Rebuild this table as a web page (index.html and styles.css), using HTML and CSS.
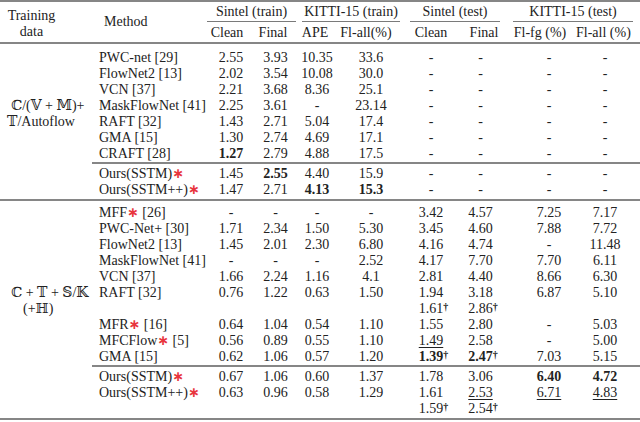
FILE: index.html
```html
<!DOCTYPE html>
<html>
<head>
<meta charset="utf-8">
<link rel="stylesheet" href="styles.css">
</head>
<body>
<div class="tbl">
  <div class="head">
    <div class="h-train">Training<br>data</div>
    <div class="h-method">Method</div>
    <div class="grp g1">Sintel (train)</div>
    <div class="grp g2">KITTI-15 (train)</div>
    <div class="grp g3">Sintel (test)</div>
    <div class="grp g4">KITTI-15 (test)</div>
    <div class="sh s2">Clean</div>
    <div class="sh s3">Final</div>
    <div class="sh s4">APE</div>
    <div class="sh s5">Fl-all(%)</div>
    <div class="sh s6">Clean</div>
    <div class="sh s7">Final</div>
    <div class="sh s8">Fl-fg (%)</div>
    <div class="sh s9">Fl-all (%)</div>
  </div>

  <div class="sec sec-first">
    <div class="r"><span></span><span>PWC-net [29]</span><span>2.55</span><span>3.93</span><span>10.35</span><span>33.6</span><span>-</span><span>-</span><span>-</span><span>-</span></div>
    <div class="r"><span></span><span>FlowNet2 [13]</span><span>2.02</span><span>3.54</span><span>10.08</span><span>30.0</span><span>-</span><span>-</span><span>-</span><span>-</span></div>
    <div class="r"><span></span><span>VCN [37]</span><span>2.21</span><span>3.68</span><span>8.36</span><span>25.1</span><span>-</span><span>-</span><span>-</span><span>-</span></div>
    <div class="r"><span class="td td1">ℂ/(𝕍 + 𝕄)+</span><span>MaskFlowNet [41]</span><span>2.25</span><span>3.61</span><span>-</span><span>23.14</span><span>-</span><span>-</span><span>-</span><span>-</span></div>
    <div class="r"><span class="td td2">𝕋/Autoflow</span><span>RAFT [32]</span><span>1.43</span><span>2.71</span><span>5.04</span><span>17.4</span><span>-</span><span>-</span><span>-</span><span>-</span></div>
    <div class="r"><span></span><span>GMA [15]</span><span>1.30</span><span>2.74</span><span>4.69</span><span>17.1</span><span>-</span><span>-</span><span>-</span><span>-</span></div>
    <div class="r"><span></span><span>CRAFT [28]</span><span><b>1.27</b></span><span>2.79</span><span>4.88</span><span>17.5</span><span>-</span><span>-</span><span>-</span><span>-</span></div>
    <div class="midrule"></div>
    <div class="r"><span></span><span>Ours(SSTM)<span class="st">∗</span></span><span>1.45</span><span><b>2.55</b></span><span>4.40</span><span>15.9</span><span>-</span><span>-</span><span>-</span><span>-</span></div>
    <div class="r"><span></span><span>Ours(SSTM++)<span class="st">∗</span></span><span>1.47</span><span>2.71</span><span><b>4.13</b></span><span><b>15.3</b></span><span>-</span><span>-</span><span>-</span><span>-</span></div>
  </div>

  <div class="sec sec-second">
    <div class="r"><span></span><span>MFF<span class="st">∗</span> [26]</span><span>-</span><span>-</span><span>-</span><span>-</span><span>3.42</span><span>4.57</span><span>7.25</span><span>7.17</span></div>
    <div class="r"><span></span><span>PWC-Net+ [30]</span><span>1.71</span><span>2.34</span><span>1.50</span><span>5.30</span><span>3.45</span><span>4.60</span><span>7.88</span><span>7.72</span></div>
    <div class="r"><span></span><span>FlowNet2 [13]</span><span>1.45</span><span>2.01</span><span>2.30</span><span>6.80</span><span>4.16</span><span>4.74</span><span>-</span><span>11.48</span></div>
    <div class="r"><span></span><span>MaskFlowNet [41]</span><span>-</span><span>-</span><span>-</span><span>2.52</span><span>4.17</span><span>7.70</span><span>7.70</span><span>6.11</span></div>
    <div class="r"><span></span><span>VCN [37]</span><span>1.66</span><span>2.24</span><span>1.16</span><span>4.1</span><span>2.81</span><span>4.40</span><span>8.66</span><span>6.30</span></div>
    <div class="r"><span class="td td3">ℂ + 𝕋 + 𝕊/𝕂</span><span>RAFT [32]</span><span>0.76</span><span>1.22</span><span>0.63</span><span>1.50</span><span>1.94</span><span>3.18</span><span>6.87</span><span>5.10</span></div>
    <div class="r"><span class="td td4">(+ℍ)</span><span></span><span></span><span></span><span></span><span></span><span>1.61<span class="dg">†</span></span><span>2.86<span class="dg">†</span></span><span></span><span></span></div>
    <div class="r"><span></span><span>MFR<span class="st">∗</span> [16]</span><span>0.64</span><span>1.04</span><span>0.54</span><span>1.10</span><span>1.55</span><span>2.80</span><span>-</span><span>5.03</span></div>
    <div class="r"><span></span><span>MFCFlow<span class="st">∗</span> [5]</span><span>0.56</span><span>0.89</span><span>0.55</span><span>1.10</span><span><u>1.49</u></span><span>2.58</span><span>-</span><span>5.00</span></div>
    <div class="r"><span></span><span>GMA [15]</span><span>0.62</span><span>1.06</span><span>0.57</span><span>1.20</span><span><b>1.39<span class="dg">†</span></b></span><span><b>2.47<span class="dg">†</span></b></span><span>7.03</span><span>5.15</span></div>
    <div class="midrule"></div>
    <div class="r"><span></span><span>Ours(SSTM)<span class="st">∗</span></span><span>0.67</span><span>1.06</span><span>0.60</span><span>1.37</span><span>1.78</span><span>3.06</span><span><b>6.40</b></span><span><b>4.72</b></span></div>
    <div class="r"><span></span><span>Ours(SSTM++)<span class="st">∗</span></span><span>0.63</span><span>0.96</span><span>0.58</span><span>1.29</span><span>1.61</span><span><u>2.53</u></span><span><u>6.71</u></span><span><u>4.83</u></span></div>
    <div class="r"><span></span><span></span><span></span><span></span><span></span><span></span><span>1.59<span class="dg">†</span></span><span>2.54<span class="dg">†</span></span><span></span><span></span></div>
  </div>
</div>
</body>
</html>
```

FILE: styles.css
```css
html, body {
  margin: 0;
  padding: 0;
  background: #ffffff;
}

body {
  width: 640px;
  height: 422px;
  overflow: hidden;
  font-family: "Liberation Serif", "DejaVu Serif", "DejaVu Sans", serif;
  font-size: 14px;
  color: #222222;
}

.tbl {
  width: 640px;
  border-top: 2px solid #868686;
  border-bottom: 2px solid #868686;
}

.head {
  display: grid;
  grid-template-columns: 93px 114px 48px 41px 42px 66px 54px 52px 66px 64px;
  grid-template-rows: 20px 20px;
  border-bottom: 2px solid #868686;
}

.h-train {
  grid-column: 1;
  grid-row: 1 / 3;
  text-align: center;
  padding-right: 30px;
  padding-top: 6px;
  line-height: 16px;
}

.h-method {
  grid-column: 2;
  grid-row: 1 / 3;
  padding-left: 11px;
  line-height: 40px;
}

.grp {
  grid-row: 1;
  text-align: center;
  line-height: 19px;
  white-space: nowrap;
  border-bottom: 1px solid #7a7a7a;
}

.g1 { grid-column: 3 / 5; }
.g2 { grid-column: 5 / 7; margin: 0 4px 0 6px; }
.g3 { grid-column: 7 / 9; margin: 0 10px 0 6px; }
.g4 { grid-column: 9 / 11; margin: 0 7px 0 3px; }

.sh {
  grid-row: 2;
  text-align: center;
  line-height: 21px;
  white-space: nowrap;
}

.s2 { grid-column: 3; padding-right: 8px; }
.s3 { grid-column: 4; padding-right: 5px; }
.s4 { grid-column: 5; padding-right: 4px; }
.s5 { grid-column: 6; padding-right: 10px; }
.s6 { grid-column: 7; }
.s7 { grid-column: 8; }
.s8 { grid-column: 9; padding-right: 6px; }
.s9 { grid-column: 10; padding-right: 12px; }

.sec-first {
  padding: 6px 0 1px;
  border-bottom: 2px solid #868686;
}

.sec-second {
  padding: 4px 0 1px;
}

.midrule {
  height: 2px;
  margin: 0 0 2px 92px;
  background: #868686;
}

.r {
  display: grid;
  grid-template-columns: 93px 114px 48px 41px 42px 66px 54px 52px 66px 64px;
  height: 16px;
  line-height: 16px;
  white-space: nowrap;
}

.r > span { text-align: center; }
.r > span:nth-child(1) { text-align: left; }
.r > span:nth-child(2) { text-align: left; padding-left: 6px; }
.r > span:nth-child(8) { padding-right: 7px; }
.r > span:nth-child(9) { padding-left: 12px; }
.r > span:nth-child(10) { padding-right: 6px; }

.td1 { padding-left: 11px; }
.td2 { padding-left: 7px; }
.td3 { padding-left: 11px; }
.td4 { padding-left: 23px; }

b { font-weight: bold; }

u {
  text-decoration: underline;
  text-decoration-thickness: 1px;
  text-underline-offset: 2px;
}

.st {
  color: #e8353d;
  font-family: "DejaVu Sans", sans-serif;
  font-weight: bold;
  font-size: 14px;
  line-height: 10px;
}

.dg {
  display: inline-block;
  width: 0;
  font-size: 10px;
  font-weight: bold;
  vertical-align: top;
  line-height: 12px;
}
```
